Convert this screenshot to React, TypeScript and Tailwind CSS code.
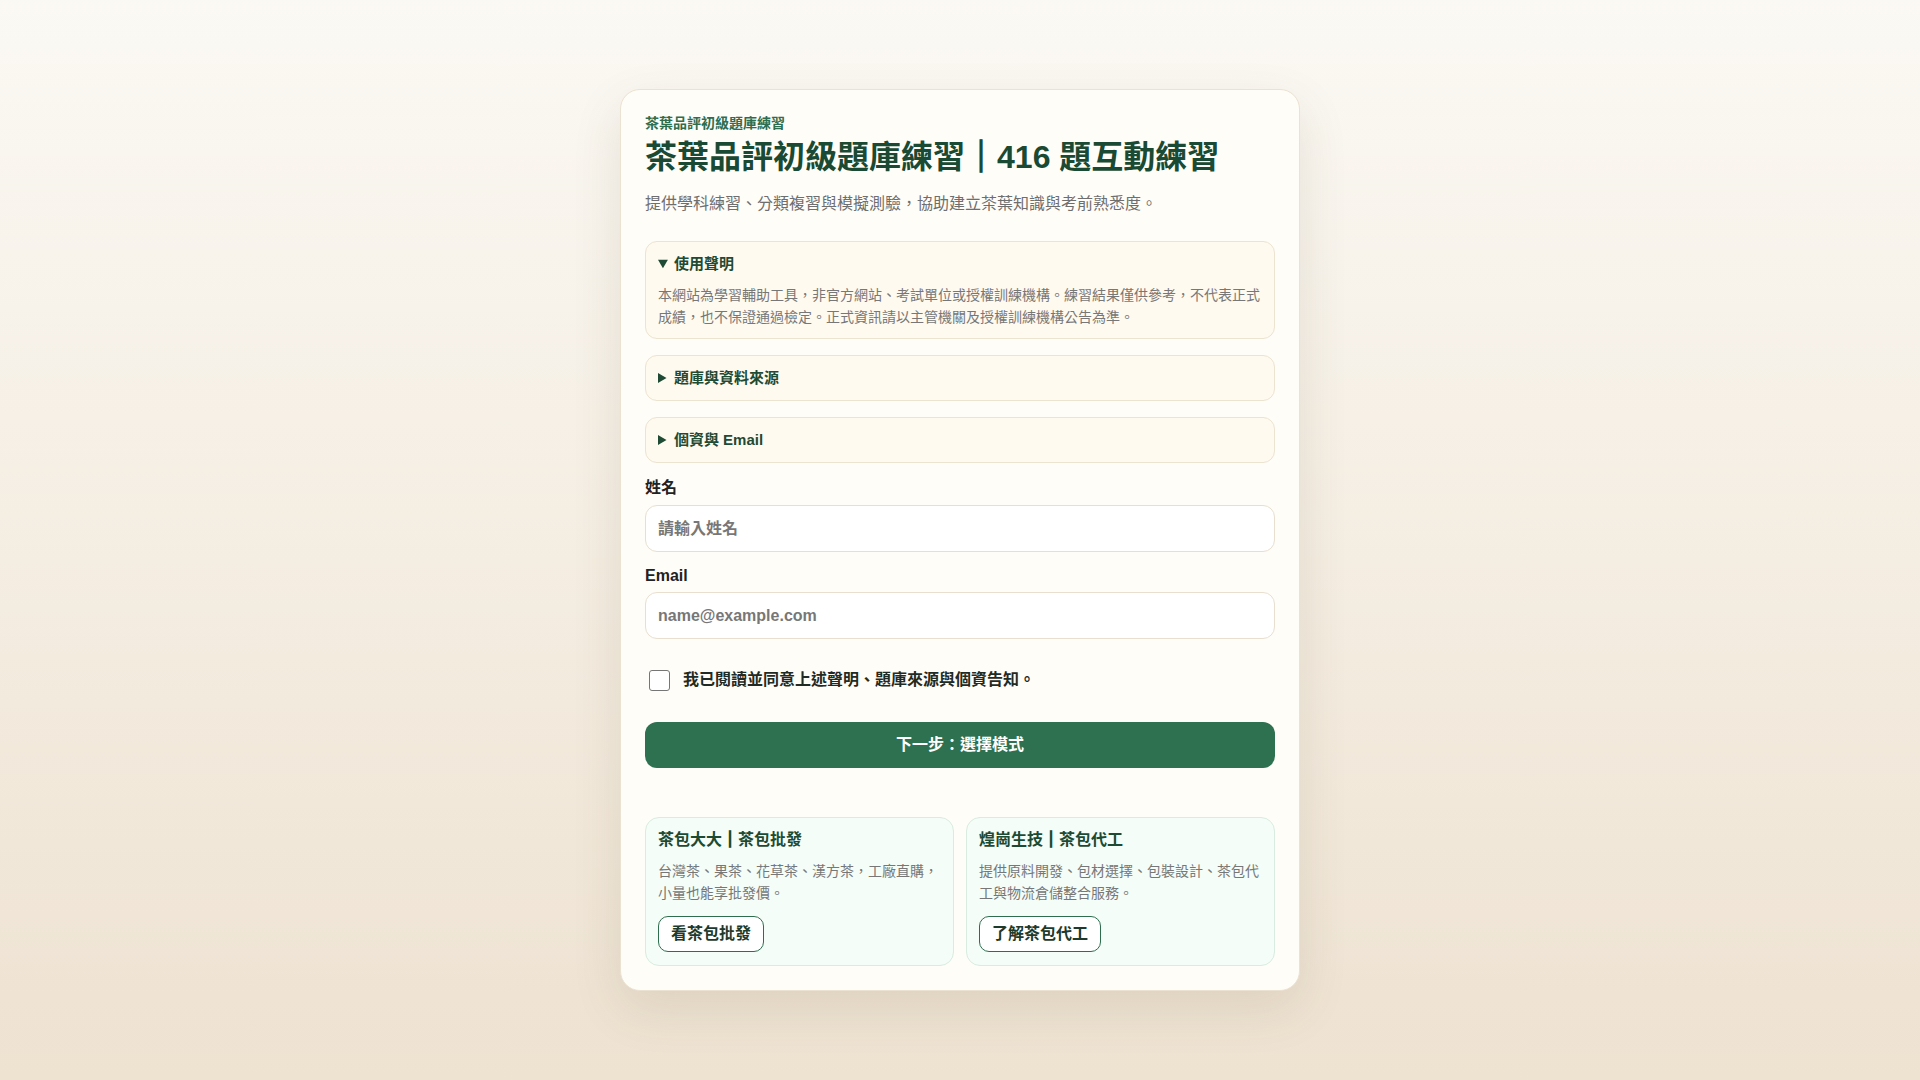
import React from "react";

const font = { fontFamily: '"Liberation Sans", "Noto Sans CJK TC", sans-serif' };

function Bar() {
  return <span className="[-webkit-text-stroke:1.6px_currentColor]">｜</span>;
}

export default function App() {
  return (
    <div
      className="min-h-screen w-full bg-gradient-to-b from-[#fbf9f4] to-[#eee2d1] pt-[89px] pb-[90px] text-[#1f2b24]"
      style={font}
    >
      <div className="mx-auto w-[680px] rounded-[20px] border border-[#ebe2d2] bg-[#fffdf8] p-6 shadow-[0_18px_50px_rgba(90,70,40,0.12)]">
        <div className="text-[14px] leading-[18px] font-bold text-[#2e6e4f]">茶葉品評初級題庫練習</div>
        <h1 className="mt-[5px] text-[32px] leading-[40px] font-bold text-[#1a4a33]">
          茶葉品評初級題庫練習<Bar />416 題互動練習
        </h1>
        <p className="mt-[15px] text-[16px] leading-[24px] text-[#6e6e6e]">
          提供學科練習、分類複習與模擬測驗，協助建立茶葉知識與考前熟悉度。
        </p>

        <details open className="mt-[25px] rounded-[12px] border border-[#ece3d0] bg-[#fffaef] px-3 pt-[11px] pb-[10px]">
          <summary className="cursor-pointer text-[15px] leading-[21px] font-bold text-[#1f4a34]">使用聲明</summary>
          <p className="mt-[10px] text-[14px] leading-[22px] text-[#777777]">
            本網站為學習輔助工具，非官方網站、考試單位或授權訓練機構。練習結果僅供參考，不代表正式成績，也不保證通過檢定。正式資訊請以主管機關及授權訓練機構公告為準。
          </p>
        </details>

        <details className="mt-4 rounded-[12px] border border-[#ece3d0] bg-[#fffaef] px-3 py-[11px]">
          <summary className="cursor-pointer text-[15px] leading-[22px] font-bold text-[#1f4a34]">題庫與資料來源</summary>
        </details>

        <details className="mt-4 rounded-[12px] border border-[#ece3d0] bg-[#fffaef] px-3 py-[11px]">
          <summary className="cursor-pointer text-[15px] leading-[22px] font-bold text-[#1f4a34]">個資與 Email</summary>
        </details>

        <label className="mt-[14px] block text-[16px] leading-[22px] font-bold text-[#222222]">姓名</label>
        <input
          type="text"
          placeholder="請輸入姓名"
          className="mt-[6px] block h-[47px] w-full rounded-[12px] border border-[#e8dfcf] bg-white px-3 text-[16px] font-bold text-[#222] placeholder:text-[#777777] outline-none"
        />

        <label className="mt-[13px] block text-[16px] leading-[22px] font-bold text-[#222222]">Email</label>
        <input
          type="email"
          placeholder="name@example.com"
          className="mt-[5px] block h-[47px] w-full rounded-[12px] border border-[#e8dfcf] bg-white px-3 text-[16px] font-bold text-[#222] placeholder:text-[#777777] outline-none"
        />

        <div className="mt-[30px] flex items-center">
          <div className="ml-[4px] h-[21px] w-[21px] rounded-[3px] border border-[#767676] bg-white" />
          <span className="ml-[13px] text-[16px] leading-[22px] font-bold text-[#1f2b24]">
            我已閱讀並同意上述聲明、題庫來源與個資告知。
          </span>
        </div>

        <button className="mt-[31px] block h-[46px] w-full rounded-[12px] bg-[#2e7150] text-[16px] font-bold text-white">
          下一步：選擇模式
        </button>

        <div className="mt-[49px] grid grid-cols-2 gap-3">
          <div className="rounded-[14px] border border-[#d8ece0] bg-[#f4fdf7] px-3 pt-[11px] pb-[13px]">
            <div className="text-[16px] leading-[22px] font-bold text-[#1d4a33]">茶包大大<Bar />茶包批發</div>
            <p className="mt-[9px] text-[14px] leading-[22px] text-[#777777]">
              台灣茶、果茶、花草茶、漢方茶，工廠直購，小量也能享批發價。
            </p>
            <button className="mt-[12px] h-[36px] rounded-[10px] border border-[#2e6e4f] bg-white px-3 text-[16px] font-bold text-[#1d3a2c]">
              看茶包批發
            </button>
          </div>
          <div className="rounded-[14px] border border-[#d8ece0] bg-[#f4fdf7] px-3 pt-[11px] pb-[13px]">
            <div className="text-[16px] leading-[22px] font-bold text-[#1d4a33]">煌崗生技<Bar />茶包代工</div>
            <p className="mt-[9px] text-[14px] leading-[22px] text-[#777777]">
              提供原料開發、包材選擇、包裝設計、茶包代工與物流倉儲整合服務。
            </p>
            <button className="mt-[12px] h-[36px] rounded-[10px] border border-[#2e6e4f] bg-white px-3 text-[16px] font-bold text-[#1d3a2c]">
              了解茶包代工
            </button>
          </div>
        </div>
      </div>
    </div>
  );
}
